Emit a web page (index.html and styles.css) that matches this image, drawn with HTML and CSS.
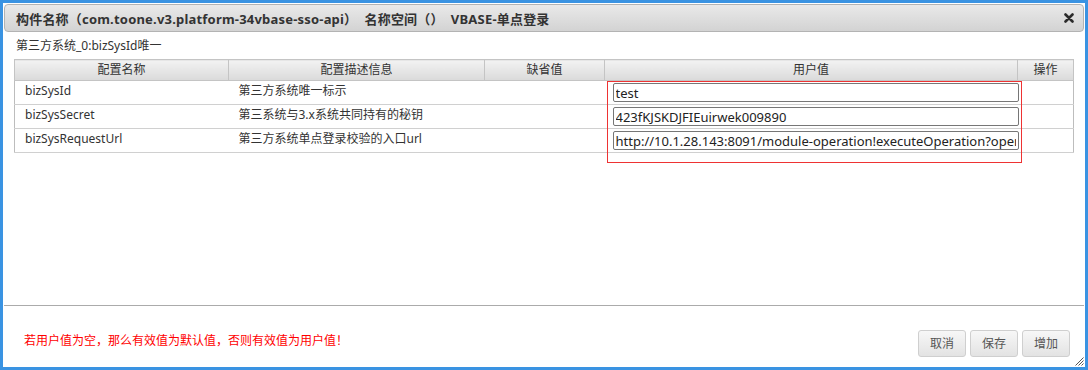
FILE: index.html
```html
<!DOCTYPE html>
<html>
<head>
<meta charset="utf-8">
<link rel="stylesheet" href="styles.css">
</head>
<body>
<div class="dialog">
  <div class="titlebar">
    <span class="title">构件名称（com.toone.v3.platform-34vbase-sso-api）  名称空间（）  VBASE-单点登录</span>
    <svg class="close" width="10" height="10" viewBox="0 0 10 10"><path d="M1.5 1.5 L8.5 8.5 M8.5 1.5 L1.5 8.5" stroke="#2b2b2b" stroke-width="2.6" stroke-linecap="round"/></svg>
  </div>
  <div class="content">
    <div class="info">第三方系统_0:bizSysId唯一</div>
    <table class="grid">
      <colgroup>
        <col class="c1"><col class="c2"><col class="c3"><col class="c4"><col class="c5">
      </colgroup>
      <thead>
        <tr><th>配置名称</th><th>配置描述信息</th><th>缺省值</th><th>用户值</th><th>操作</th></tr>
      </thead>
      <tbody>
        <tr><td>bizSysId</td><td>第三方系统唯一标示</td><td></td><td class="val"><input class="inp" type="text" value="test"></td><td></td></tr>
        <tr><td>bizSysSecret</td><td>第三系统与3.x系统共同持有的秘钥</td><td></td><td class="val"><input class="inp" type="text" value="423fKJSKDJFIEuirwek009890"></td><td></td></tr>
        <tr><td>bizSysRequestUrl</td><td>第三方系统单点登录校验的入口url</td><td></td><td class="val"><input class="inp" type="text" value="http://10.1.28.143:8091/module-operation!executeOperation?operation=validate"></td><td></td></tr>
      </tbody>
    </table>
    <div class="mark"></div>
  </div>
  <div class="footer">
    <span class="hint">若用户值为空，那么有效值为默认值，否则有效值为用户值！</span>
    <div class="btns">
      <button class="btn">取消</button>
      <button class="btn">保存</button>
      <button class="btn">增加</button>
    </div>
  </div>
  <svg class="grip" width="10" height="10" viewBox="0 0 10 10"><path d="M9.5 1.5 L1.5 9.5 M9.5 4.5 L4.5 9.5 M9.5 7.5 L7.5 9.5" stroke="#555" stroke-width="1"/></svg>
</div>
</body>
</html>
```

FILE: styles.css
```css
html, body {
  margin: 0;
  padding: 0;
  background: #fff;
}
body {
  font-family: "Noto Sans", "Noto Sans CJK SC", sans-serif;
  font-size: 12px;
  color: #333;
}
.dialog {
  position: relative;
  width: 1088px;
  height: 370px;
  box-sizing: border-box;
  border: 3px solid #3a93e2;
  padding: 1px;
  display: flex;
  flex-direction: column;
  background: #fff;
}
.titlebar {
  height: 28px;
  box-sizing: border-box;
  border: 1px solid #b3b3b3;
  border-radius: 4px;
  background: linear-gradient(#e9e9e9, #d3d3d3);
  display: flex;
  align-items: center;
  justify-content: space-between;
  padding: 0 9px 0 11px;
  flex: none;
}
.title {
  font-size: 13px;
  font-weight: bold;
  color: #333;
  white-space: pre;
  letter-spacing: 0.2px;
}
.content {
  position: relative;
  flex: 1;
  padding: 6px 11px 0 10px;
}
.info {
  line-height: 16px;
  padding-left: 2px;
  margin-bottom: 5px;
}
.grid {
  width: 1059px;
  border-collapse: collapse;
  table-layout: fixed;
  border: 1px solid #bdbdbd;
}
.c1 { width: 214px; }
.c2 { width: 256px; }
.c3 { width: 120px; }
.c4 { width: 413px; }
.c5 { width: 56px; }
.grid th {
  height: 20px;
  padding: 0;
  font-weight: normal;
  color: #333;
  background: linear-gradient(#f2f2f2, #dadada);
  border: 1px solid #c4c4c4;
  line-height: 18px;
}
.grid td {
  height: 24px;
  padding: 2px 0 0 10px;
  border-top: 1px solid #d0d0d0;
  border-bottom: 1px solid #d0d0d0;
  border-left: none;
  border-right: none;
  line-height: 16px;
  vertical-align: top;
  box-sizing: border-box;
  white-space: nowrap;
  overflow: visible;
}
.grid td.val {
  padding-left: 8px;
  padding-top: 0;
  vertical-align: middle;
}
.inp {
  display: block;
  width: 406px;
  height: 19px;
  box-sizing: border-box;
  border: 1px solid #767676;
  border-radius: 2px;
  padding: 0 2px;
  margin: 0;
  font-family: "Noto Sans", "Noto Sans CJK SC", sans-serif;
  font-size: 13px;
  color: #222;
  background: #fff;
  outline: none;
}
.mark {
  position: absolute;
  left: 603px;
  top: 49px;
  width: 413px;
  height: 80px;
  border: 1px solid #ee3333;
  pointer-events: none;
}
.footer {
  flex: none;
  height: 61px;
  box-sizing: border-box;
  border-top: 1px solid #ababab;
  display: flex;
  align-items: center;
  justify-content: space-between;
  padding: 0 14px 0 20px;
}
.hint {
  color: #ff0000;
  margin-top: 7px;
}
.btns {
  display: flex;
  gap: 4px;
  margin-top: 14px;
}
.btn {
  width: 48px;
  height: 27px;
  box-sizing: border-box;
  border: 1px solid #cfcfcf;
  border-radius: 3px;
  background: linear-gradient(#f7f7f7, #e3e3e3);
  color: #555;
  font-family: "Noto Sans", "Noto Sans CJK SC", sans-serif;
  font-size: 12px;
  padding: 0;
}
.grip {
  position: absolute;
  right: 1px;
  bottom: 1px;
}
```
